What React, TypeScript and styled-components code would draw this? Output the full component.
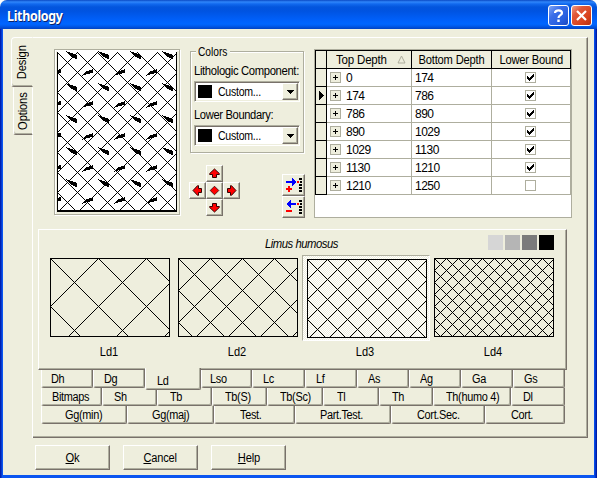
import React from "react";
import styled, { createGlobalStyle, css } from "styled-components";

const face = "#eeeedd";
const shade = "#aeae9e";
const dark = "#78716a";

const GlobalStyle = createGlobalStyle`
  body { margin: 0; background: #fff; }
  *, *::before, *::after { box-sizing: border-box; }
  #root { font: 12px/14px "Liberation Sans", Arial, sans-serif; color: #000; }
`;

const raised = css`
  border: 1px solid;
  border-color: #fff ${dark} ${dark} #fff;
  box-shadow: inset -1px -1px 0 ${shade};
`;

const etched = css`
  border: 1px solid ${shade};
  box-shadow: 1px 1px 0 #fff, inset 1px 1px 0 #fff;
`;

/** Text condensed horizontally, like the tall bitmap UI face. */
const Narrow = styled.span<{ $x: number; $from?: string }>`
  display: inline-block;
  white-space: nowrap;
  transform: scaleX(${(p) => p.$x});
  transform-origin: ${(p) => p.$from ?? "left"} center;
`;

const Window = styled.div`
  width: 597px;
  height: 478px;
  display: flex;
  flex-direction: column;
  background: ${face};
  border-radius: 7px 7px 0 0;
  overflow: hidden;
`;

const TitleBar = styled.header`
  height: 29px;
  flex: none;
  display: flex;
  align-items: center;
  gap: 2px;
  padding: 2px 5px 0 7px;
  background: linear-gradient(#0a49c4 0, #2f86fb 2px, #1169ee 4px, #0355dd 7px, #0053e1 11px, #0060fa 20px, #0066ff 24px, #005bee 26px, #0142c2 29px);
`;

const Title = styled.h1`
  flex: 1;
  margin: 0;
  font: bold 14px/18px "Noto Sans", sans-serif;
  color: #fff;
  text-shadow: 1px 1px 0 #0a246a;
  letter-spacing: -0.35px;
`;

const CaptionButton = styled.button<{ $close?: boolean }>`
  width: 21px;
  height: 21px;
  padding: 0;
  border: 1px solid #fff;
  border-radius: 3px;
  background: ${(p) =>
    p.$close
      ? "linear-gradient(135deg, #f0a089 0, #e0583a 30%, #d8421c 70%, #b83010 100%)"
      : "linear-gradient(135deg, #7ea5f5 0, #3a6de8 35%, #2860e0 70%, #1a48c0 100%)"};
  svg { display: block; }
`;

const Client = styled.main`
  flex: 1;
  border: solid #0046e0;
  border-width: 0 3px 3px;
  border-image: linear-gradient(90deg, #0020b0 0, #0020b0 1px, #0a55f0 2px, #0a55f0 594px, #0040e0 595px, #001090 597px) 0 3 3 3;
  padding: 8px 6px 0 8px;
`;

const TabbedArea = styled.section`
  display: flex;
  height: 401px;
`;

const SideTabs = styled.nav`
  width: 22px;
  display: flex;
  flex-direction: column;
`;

const SideTab = styled.div<{ $active?: boolean }>`
  display: flex;
  align-items: center;
  justify-content: center;
  height: ${(p) => (p.$active ? 50 : 48)}px;
  margin-left: ${(p) => (p.$active ? 0 : 2)}px;
  border: 1px solid #fff;
  border-top-color: ${(p) => (p.$active ? "#fff" : "transparent")};
  border-bottom-color: ${dark};
  border-right-color: ${(p) => (p.$active ? "transparent" : "#fff")};
  border-radius: ${(p) => (p.$active ? "4px 0 0 3px" : "0 0 0 3px")};
  box-shadow: inset 0 -1px 0 ${shade};
`;

const VerticalText = styled.span`
  writing-mode: vertical-rl;
  transform: rotate(180deg) scaleY(0.93);
  letter-spacing: -0.15px;
`;

const SideRest = styled.div`
  flex: 1;
  border-right: 1px solid #fff;
`;

const Panel = styled.div`
  flex: 1;
  border: 1px solid;
  border-color: #fff ${dark} ${dark} transparent;
  border-left: 0;
  box-shadow: inset -1px -1px 0 ${shade};
  padding-top: 11px;
`;

const TopRow = styled.div`
  display: flex;
  height: 169px;
  padding-left: 21px;
`;

const Preview = styled.div`
  width: 126px;
  height: 166px;
  padding: 1px 2px;
  ${etched}
  svg { display: block; }
`;

const Middle = styled.div`
  width: 124px;
  margin-left: 10px;
  padding-top: 2px;
`;

const Group = styled.div`
  width: 114px;
  height: 102px;
  padding: 0 3px;
  ${etched}
`;

const Legend = styled.div`
  width: 34px;
  height: 14px;
  margin: -7px 0 0 2px;
  padding: 0 2px;
  background: ${face};
`;

const Label = styled.label<{ $gap: number }>`
  display: block;
  height: 14px;
  margin-top: ${(p) => p.$gap}px;
  letter-spacing: -0.37px;
`;

const Select = styled.div`
  width: 106px;
  height: 21px;
  margin-top: 3px;
  display: flex;
  align-items: center;
  padding: 0 1px 0 2px;
  background: #fff;
  border: 1px solid;
  border-color: ${shade} #fff #fff ${shade};
  box-shadow: inset 1px 1px 0 ${dark}, inset -1px -1px 0 ${face};
`;

const Swatch = styled.i`
  width: 14px;
  height: 13px;
  margin: 0 6px 0 1px;
  background: #000;
`;

const SelectText = styled.span`
  flex: 1;
  letter-spacing: -0.3px;
`;

const SelectArrow = styled.span`
  width: 16px;
  height: 17px;
  display: flex;
  align-items: center;
  justify-content: center;
  background: ${face};
  ${raised}
`;

const Tools = styled.div`
  display: flex;
  justify-content: space-between;
  margin: 12px 9px 0 -1px;
`;

const ArrowPad = styled.div`
  display: grid;
  grid-template-columns: repeat(3, 17px);
  grid-template-rows: repeat(3, 17px);
`;

const PadButton = styled.button<{ $area: string }>`
  grid-area: ${(p) => p.$area};
  padding: 0;
  display: flex;
  align-items: center;
  justify-content: center;
  background: ${face};
  ${raised}
`;

const RowButtons = styled.div`
  display: flex;
  flex-direction: column;
  padding-top: 9px;
`;

const RowButton = styled.button`
  width: 23px;
  height: 22px;
  padding: 0 0 0 1px;
  display: flex;
  align-items: center;
  justify-content: center;
  background: ${face};
  ${raised}
`;

const Grid = styled.div`
  width: 258px;
  height: 169px;
  background: #fff;
  border: 1px solid ${shade};
`;

const GridRow = styled.div<{ $head?: boolean }>`
  display: grid;
  grid-template-columns: 12px 85px 80px 79px;
  height: ${(p) => (p.$head ? 19 : 18)}px;
`;

const HeadCell = styled.div<{ $first?: boolean; $sorted?: boolean }>`
  display: flex;
  align-items: center;
  justify-content: ${(p) => (p.$sorted ? "space-between" : "center")};
  padding: ${(p) => (p.$sorted ? "0 5px 0 9px" : "0")};
  background: ${face};
  border: solid #000;
  border-width: 1px 1px 1px ${(p) => (p.$first ? 1 : 0)}px;
  letter-spacing: -0.2px;
  white-space: nowrap;
`;

const Indicator = styled.div`
  display: flex;
  align-items: center;
  justify-content: center;
  background: ${face};
  border: solid #000;
  border-width: 0 1px 1px 1px;
`;

const Cell = styled.div<{ $center?: boolean }>`
  display: flex;
  align-items: center;
  justify-content: ${(p) => (p.$center ? "center" : "flex-start")};
  gap: 5px;
  padding: ${(p) => (p.$center ? "0 1px 0 0" : "0 0 0 3px")};
  border: solid ${shade};
  border-width: 0 1px 1px 0;
  letter-spacing: -0.5px;
`;

const Box = styled.span<{ $plain?: boolean }>`
  width: 11px;
  height: 11px;
  border: 1px solid ${shade};
  background: ${(p) => (p.$plain ? "#fff" : face)};
  svg { display: block; }
`;

const Library = styled.section`
  width: 529px;
  margin: 11px 0 0 5px;
`;

const LibraryPage = styled.div`
  height: 141px;
  padding-left: 11px;
  ${raised}
`;

const LibraryHead = styled.div`
  height: 25px;
  display: flex;
  padding-top: 5px;
`;

const Species = styled.div`
  width: 438px;
  padding: 2px 0 0 215px;
  font-style: italic;
  letter-spacing: -0.5px;
`;

const Tones = styled.div`
  display: flex;
  gap: 2px;
`;

const Tone = styled.i<{ $color: string }>`
  width: 15px;
  height: 15px;
  background: ${(p) => p.$color};
`;

const Samples = styled.div`
  display: flex;
`;

const Sample = styled.figure`
  width: 128px;
  margin: 0;
`;

const SampleFrame = styled.div<{ $selected?: boolean }>`
  width: 128px;
  height: 86px;
  margin-left: -4px;
  padding: 3px 4px;
  ${(p) =>
    p.$selected &&
    css`
      padding: 3px 3px 3px 4px;
      border: 1px solid;
      border-color: ${shade} #fff #fff ${shade};
      background: repeating-conic-gradient(#fff 0 25%, ${face} 0 50%) 0 0 / 2px 2px;
    `}
  svg { display: block; }
`;

const Caption = styled.figcaption`
  width: 118px;
  padding-top: 4px;
  text-align: center;
`;

const TabRow = styled.div`
  display: flex;
  height: 18px;
  margin-left: 3px;
`;

const Tab = styled.div<{ $w: number; $pad: number; $active?: boolean }>`
  flex: none;
  width: ${(p) => p.$w}px;
  height: 18px;
  padding: 2px 0 0 ${(p) => p.$pad}px;
  letter-spacing: -0.35px;
  background: ${face};
  border: 1px solid;
  border-color: transparent ${dark} ${dark} #fff;
  border-top: 0;
  border-radius: 0 0 2px 3px;
  box-shadow: inset -1px -1px 0 ${shade};
  ${(p) =>
    p.$active &&
    css`
      position: relative;
      z-index: 1;
      height: 22px;
      margin-top: -2px;
      padding-top: 6px;
    `}
`;

const Actions = styled.footer`
  display: flex;
  gap: 13px;
  padding: 7px 0 0 24px;
`;

const ActionButton = styled.button`
  width: 75px;
  height: 25px;
  padding: 0;
  font: inherit;
  letter-spacing: -0.2px;
  color: #000;
  background: ${face};
  ${raised}
`;

/** Parallel diagonals in both directions, meeting every `step` pixels. */
function lattice(w: number, h: number, step: number) {
  let d = "";
  for (let x = -Math.ceil(h / step) * step; x < w; x += step) {
    d += `M${x} 0l${h} ${h}`;
  }
  for (let x = 0; x < w + h + step; x += step) {
    d += `M${x + 1} 0l${-h} ${h}`;
  }
  return d;
}

function Hatch({ step }: { step: number }) {
  return (
    <svg width="120" height="79" shapeRendering="crispEdges">
      <path d={lattice(120, 79, step)} stroke="#000" strokeWidth="1" fill="none" />
      <rect x=".5" y=".5" width="119" height="78" fill="none" stroke="#000" />
    </svg>
  );
}

function PreviewDrawing() {
  const wedges: string[] = [];
  for (let r = 0; r < 5; r++) {
    for (let c = 0; c < 4; c++) {
      wedges.push(`M${8 + 32 * c} ${32 * r - 1}l12 4v3l-1 1l-6 -3z`);
      wedges.push(`M${-8 + 32 * c} ${24 + 32 * r}l6 -5l6 -2v4l-6 1z`);
    }
  }
  return (
    <svg width="120" height="161" shapeRendering="crispEdges">
      <rect width="120" height="161" fill="#fff" />
      <g transform="translate(0 1)">
        <path d={lattice(120, 160, 20)} stroke="#000" fill="none" />
        <path d={wedges.join("")} />
      </g>
      <path d="M.5 1V160M119.5 1V160M0 160H120" stroke="#000" fill="none" />
      <path d="M0 159h120v2h-120z" />
    </svg>
  );
}

function Arrow({ turn }: { turn: number }) {
  return (
    <svg width="13" height="13" viewBox="0 0 13 13">
      <path
        d="M6.5 2L11.3 6.5V7.5H8.5V10.5H4.5V7.5H1.7V6.5Z"
        fill="#f00"
        stroke="#300"
        transform={`rotate(${turn} 6.5 6.5)`}
      />
    </svg>
  );
}

function RowIcon({ insert }: { insert?: boolean }) {
  return (
    <svg width="17" height="16" shapeRendering="crispEdges">
      {insert ? (
        <path d="M0 4h6v-3h1v1h1v1h1v1h1v2h-1v1h-1v1h-1v1h-1v-3h-6z" fill="#00f" />
      ) : (
        <path d="M10 4h-5v-3h-1v1h-1v1h-1v1h-1v2h1v1h1v1h1v1h1v-3h5z" fill="#00f" />
      )}
      <path d="M11 4h2v2h-2z" fill="#f00" />
      <path d="M13 1h3v2h-3zM14 4h2v2h-2zM13 7h3v2h-3zM13 10h3v2h-3zM13 13h3v2h-3z" />
      <path d={insert ? "M0 11h2v-2h2v2h2v2h-2v2h-2v-2h-2z" : "M0 11h6v2h-6z"} fill="#f00" />
    </svg>
  );
}

function ColorSelect() {
  return (
    <Select>
      <Swatch />
      <SelectText>
        <Narrow $x={0.88}>Custom...</Narrow>
      </SelectText>
      <SelectArrow>
        <svg width="7" height="4" shapeRendering="crispEdges">
          <path d="M0 0h7v1h-1v1h-1v1h-1v1h-1v-1h-1v-1h-1v-1h-1z" />
        </svg>
      </SelectArrow>
    </Select>
  );
}

const depths: [number, number, boolean][] = [
  [0, 174, true],
  [174, 786, true],
  [786, 890, true],
  [890, 1029, true],
  [1029, 1130, true],
  [1130, 1210, true],
  [1210, 1250, false],
];

function DepthGrid() {
  return (
    <Grid>
      <GridRow $head>
        <HeadCell $first />
        <HeadCell $sorted>
          <Narrow $x={0.96}>Top Depth</Narrow>
          <svg width="9" height="9">
            <path d="M4.5 1L8 8H1Z" fill="none" stroke={shade} />
          </svg>
        </HeadCell>
        <HeadCell>
          <Narrow $x={0.93} $from="center">Bottom Depth</Narrow>
        </HeadCell>
        <HeadCell>
          <Narrow $x={0.93} $from="center">Lower Bound</Narrow>
        </HeadCell>
      </GridRow>
      {depths.map(([top, bottom, bound], i) => (
        <GridRow key={top}>
          <Indicator>
            {i === 1 && (
              <svg width="5" height="9" shapeRendering="crispEdges">
                <path d="M0 0L5 4.5L0 9Z" />
              </svg>
            )}
          </Indicator>
          <Cell>
            <Box>
              <svg width="9" height="9" shapeRendering="crispEdges">
                <path d="M2 4h2v-2h1v2h2v1h-2v2h-1v-2h-2z" />
              </svg>
            </Box>
            {top}
          </Cell>
          <Cell>{bottom}</Cell>
          <Cell $center>
            <Box $plain>
              {bound && (
                <svg width="9" height="9" shapeRendering="crispEdges">
                  <path d="M1 3h1v1h1v1h1v-1h1v-1h1v-1h1v-1h1v3h-1v1h-1v1h-1v1h-1v1h-1v-1h-1v-1h-1z" />
                </svg>
              )}
            </Box>
          </Cell>
        </GridRow>
      ))}
    </Grid>
  );
}

type TabSpec = [label: string, width: number, pad: number];

const tabRows: TabSpec[][] = [
  [
    ["Dh", 52, 9], ["Dg", 52, 10], ["Ld", 56, 11], ["Lso", 51, 8], ["Lc", 53, 10],
    ["Lf", 52, 10], ["As", 52, 10], ["Ag", 52, 10], ["Ga", 52, 10], ["Gs", 52, 10],
  ],
  [
    ["Bitmaps", 61, 10], ["Sh", 55, 11], ["Tb", 55, 12], ["Tb(S)", 55, 12], ["Tb(Sc)", 56, 12],
    ["Tl", 56, 13], ["Th", 54, 12], ["Th(humo 4)", 78, 12], ["Dl", 54, 11],
  ],
  [
    ["Gg(min)", 86, 23], ["Gg(maj)", 87, 24], ["Test.", 81, 25],
    ["Part.Test.", 96, 24], ["Cort.Sec.", 94, 25], ["Cort.", 80, 25],
  ],
];

export default function App() {
  return (
    <>
      <GlobalStyle />
      <Window>
        <TitleBar>
          <Title>
            <Narrow $x={0.89}>Lithology</Narrow>
          </Title>
          <CaptionButton>
            <svg width="19" height="19">
              <path d="M6 7C6 3.4 13 3.4 13 7C13 9.4 9.5 9 9.5 12" fill="none" stroke="#fff" strokeWidth="2.2" />
              <path d="M8.3 13.5h2.4v2.4h-2.4z" fill="#fff" />
            </svg>
          </CaptionButton>
          <CaptionButton $close>
            <svg width="19" height="19">
              <path d="M5 5L14 14M14 5L5 14" stroke="#fff" strokeWidth="2.2" />
            </svg>
          </CaptionButton>
        </TitleBar>
        <Client>
          <TabbedArea>
            <SideTabs>
              <SideTab $active>
                <VerticalText>Design</VerticalText>
              </SideTab>
              <SideTab>
                <VerticalText>Options</VerticalText>
              </SideTab>
              <SideRest />
            </SideTabs>
            <Panel>
              <TopRow>
                <Preview>
                  <PreviewDrawing />
                </Preview>
                <Middle>
                  <Group>
                    <Legend>
                      <Narrow $x={0.85}>Colors</Narrow>
                    </Legend>
                    <Label $gap={5}>
                      <Narrow $x={0.94}>Lithologic Component:</Narrow>
                    </Label>
                    <ColorSelect />
                    <Label $gap={6}>
                      <Narrow $x={0.93}>Lower Boundary:</Narrow>
                    </Label>
                    <ColorSelect />
                  </Group>
                  <Tools>
                    <ArrowPad>
                      <PadButton $area="1 / 2"><Arrow turn={0} /></PadButton>
                      <PadButton $area="2 / 1"><Arrow turn={270} /></PadButton>
                      <PadButton $area="2 / 2">
                        <svg width="11" height="11">
                          <path d="M5.5 1.2L9.8 5.5L5.5 9.8L1.2 5.5Z" fill="#f00" stroke="#300" strokeWidth=".8" />
                        </svg>
                      </PadButton>
                      <PadButton $area="2 / 3"><Arrow turn={90} /></PadButton>
                      <PadButton $area="3 / 2"><Arrow turn={180} /></PadButton>
                    </ArrowPad>
                    <RowButtons>
                      <RowButton><RowIcon insert /></RowButton>
                      <RowButton><RowIcon /></RowButton>
                    </RowButtons>
                  </Tools>
                </Middle>
                <DepthGrid />
              </TopRow>
              <Library>
                <LibraryPage>
                  <LibraryHead>
                    <Species>
                      <Narrow $x={0.94}>Limus humosus</Narrow>
                    </Species>
                    <Tones>
                      {["#d6d6d6", "#b5b5b5", "#7b7b7b", "#000"].map((c) => (
                        <Tone key={c} $color={c} />
                      ))}
                    </Tones>
                  </LibraryHead>
                  <Samples>
                    {[48, 32, 20, 12].map((step, i) => (
                      <Sample key={step}>
                        <SampleFrame $selected={i === 2}>
                          <Hatch step={step} />
                        </SampleFrame>
                        <Caption>
                          <Narrow $x={0.92} $from="center">Ld{i + 1}</Narrow>
                        </Caption>
                      </Sample>
                    ))}
                  </Samples>
                </LibraryPage>
                {tabRows.map((row, r) => (
                  <TabRow key={r}>
                    {row.map(([label, w, pad]) => (
                      <Tab key={label} $w={w} $pad={pad} $active={label === "Ld"}>
                        <Narrow $x={0.91}>{label}</Narrow>
                      </Tab>
                    ))}
                  </TabRow>
                ))}
              </Library>
            </Panel>
          </TabbedArea>
          <Actions>
            <ActionButton>
              <Narrow $x={0.93} $from="center"><u>O</u>k</Narrow>
            </ActionButton>
            <ActionButton>
              <Narrow $x={0.92} $from="center"><u>C</u>ancel</Narrow>
            </ActionButton>
            <ActionButton>
              <Narrow $x={0.93} $from="center"><u>H</u>elp</Narrow>
            </ActionButton>
          </Actions>
        </Client>
      </Window>
    </>
  );
}
